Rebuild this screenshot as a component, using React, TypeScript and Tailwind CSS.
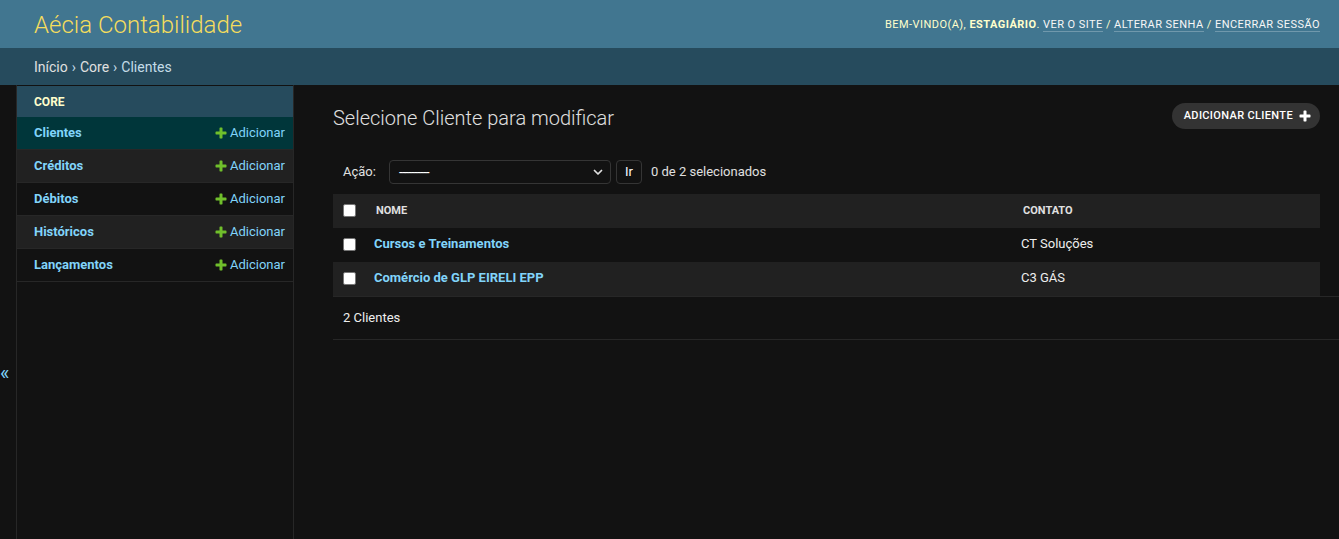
import React from "react";

const PLUS_D =
  "M1600 796v192q0 40-28 68t-68 28h-416v416q0 40-28 68t-68 28h-192q-40 0-68-28t-28-68v-416h-416q-40 0-68-28t-28-68v-192q0-40 28-68t68-28h416v-416q0-40 28-68t68-28h192q40 0 68 28t28 68v416h416q40 0 68 28t28 68z";

function PlusIcon({ className, color }: { className?: string; color: string }) {
  return (
    <svg viewBox="0 0 1792 1792" className={className} aria-hidden="true">
      <path d={PLUS_D} fill={color} />
    </svg>
  );
}

const models = [
  { name: "Clientes", bg: "bg-[#00363a]" },
  { name: "Créditos", bg: "bg-[#212121]" },
  { name: "Débitos", bg: "bg-[#121212]" },
  { name: "Históricos", bg: "bg-[#212121]" },
  { name: "Lançamentos", bg: "bg-[#121212]" },
];

const rows = [
  { nome: "Cursos e Treinamentos", contato: "CT Soluções", bg: "bg-[#121212]" },
  { nome: "Comércio de GLP EIRELI EPP", contato: "C3 GÁS", bg: "bg-[#212121]" },
];

function Checkbox() {
  return (
    <span className="inline-block w-[13px] h-[13px] rounded-[2px] bg-white border border-[#767676] align-middle" />
  );
}

export default function App() {
  return (
    <div
      className="w-full h-[539px] overflow-hidden bg-[#121212] text-[#eeeeee] flex flex-col"
      style={{ fontFamily: "Roboto, 'Noto Sans', sans-serif" }}
    >
      {/* Header */}
      <header className="h-[48px] shrink-0 bg-[#417690] flex items-center justify-between pl-[34px] pr-[19px]">
        <div className="text-[24px] font-light leading-[28px] text-[#f5dd5d] mt-[1px]">Aécia Contabilidade</div>
        <div className="text-[11px] tracking-[0.45px] uppercase text-[#ffffcc] leading-[14px] mt-[2px]">
          BEM-VINDO(A), <strong className="font-bold">ESTAGIÁRIO</strong>.{" "}
          <a className="text-[#f7f7f7] border-b border-white/25">VER O SITE</a> /{" "}
          <a className="text-[#f7f7f7] border-b border-white/25">ALTERAR SENHA</a> /{" "}
          <a className="text-[#f7f7f7] border-b border-white/25">ENCERRAR SESSÃO</a>
        </div>
      </header>

      {/* Breadcrumbs */}
      <div className="h-[37px] shrink-0 bg-[#264b5d] flex items-center pl-[34px] pt-[2px] text-[14px] text-[#c4dce8]">
        <a className="text-[#e0e0e0]">Início</a>
        <span className="mx-[4px]">›</span>
        <a className="text-[#e0e0e0]">Core</a>
        <span className="mx-[4px]">›</span>
        <span>Clientes</span>
      </div>

      {/* Main */}
      <div className="flex flex-1 min-h-0">
        {/* Toggle */}
        <div className="w-[17px] shrink-0 border-r border-[#272727] pt-[277px] text-[20px] leading-[23px] text-[#81d4fa]">
          <span className="block">«</span>
        </div>

        {/* Sidebar */}
        <nav className="w-[277px] shrink-0 border-r border-[#272727] pt-[1px]">
          <div className="h-[31px] bg-[#264b5d] flex items-center pl-[17px] text-[12px] font-bold text-[#ffffcc] uppercase">
            Core
          </div>
          {models.map((m) => (
            <div
              key={m.name}
              className={`h-[33px] ${m.bg} border-b border-[#272727] flex items-center justify-between pl-[17px] pr-2 text-[13px]`}
            >
              <a className="font-bold text-[#81d4fa]">{m.name}</a>
              <a className="flex items-center text-[#81d4fa]">
                <PlusIcon className="w-[14px] h-[14px] mr-[2px]" color="#70bf2b" />
                Adicionar
              </a>
            </div>
          ))}
        </nav>

        {/* Content */}
        <main className="flex-1 min-w-0 pl-[39px] pt-[18px]">
          <div className="flex items-center justify-between pr-[19px] h-[26px]">
            <h1 className="text-[20px] font-light text-[#e0e0e0] mt-[4px]">Selecione Cliente para modificar</h1>
            <a className="h-[26px] rounded-[15px] bg-[#333333] flex items-center pl-3 pr-[8px] text-[11px] font-medium tracking-[0.35px] uppercase text-white">
              ADICIONAR CLIENTE
              <PlusIcon className="w-[14px] h-[14px] ml-[5px]" color="#ffffff" />
            </a>
          </div>

          {/* Actions */}
          <div className="mt-[21px] h-[44px] flex items-center px-[10px] text-[13px] text-[#e0e0e0]">
            <span>Ação:</span>
            <div className="ml-[13px] w-[222px] h-[24px] border border-[#353535] rounded-[4px] flex items-center justify-between pl-[9px] pr-[6px] bg-[#121212]">
              <span className="text-white tracking-[-0.9px] text-[14px]">----------</span>
              <svg viewBox="0 0 24 24" className="w-[12px] h-[12px]" aria-hidden="true">
                <path d="M5 9l7 7 7-7" fill="none" stroke="#e0e0e0" strokeWidth="3.5" strokeLinecap="round" strokeLinejoin="round" />
              </svg>
            </div>
            <div className="ml-[5px] w-[26px] h-[24px] border border-[#353535] rounded-[4px] flex items-center justify-center text-white">
              Ir
            </div>
            <span className="ml-[9px]">0 de 2 selecionados</span>
          </div>

          {/* Table */}
          <div className="pr-[19px]">
            <div className="flex h-[34px] bg-[#212121] items-center pt-[1px] text-[11px] font-bold uppercase text-[#e0e0e0]">
              <div className="w-[33px] pl-[10px] flex items-center -mt-[2px]">
                <Checkbox />
              </div>
              <div className="w-[647px] pl-[10px]">Nome</div>
              <div className="flex-1 pl-[10px]">Contato</div>
            </div>
            {rows.map((r) => (
              <div key={r.nome} className={`flex h-[34px] ${r.bg} items-center pb-[2px] text-[13px]`}>
                <div className="w-[33px] pl-[10px] flex items-center">
                  <Checkbox />
                </div>
                <div className="w-[647px] pl-[8px]">
                  <a className="font-bold text-[#81d4fa]">{r.nome}</a>
                </div>
                <div className="flex-1 pl-[8px] text-[#eeeeee]">{r.contato}</div>
              </div>
            ))}
          </div>

          {/* Paginator */}
          <div className="h-[44px] border-t border-b border-[#272727] flex items-center pl-[10px] text-[13px] text-[#eeeeee]">
            2 Clientes
          </div>
        </main>
      </div>
    </div>
  );
}
